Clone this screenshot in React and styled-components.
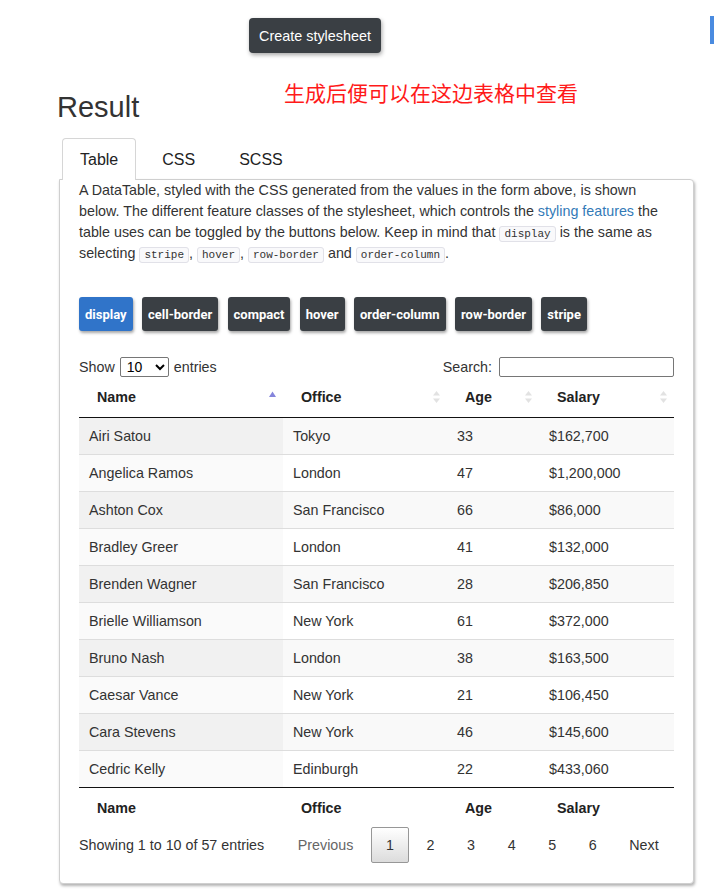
import React from "react";
import styled, { createGlobalStyle } from "styled-components";

const Global = createGlobalStyle`
  html, body { margin: 0; padding: 0; background: #fff; }
  body {
    font-family: "Liberation Sans", Arial, sans-serif;
    color: #333;
    font-size: 14.3px;
  }
`;

const Page = styled.div`
  width: 716px;
  padding-bottom: 10px;
`;

const TopBar = styled.div`
  display: flex;
  align-items: flex-start;
  justify-content: space-between;
  padding: 18px 2px 0 249px;
`;

const DarkButton = styled.button`
  height: 35px;
  padding: 0 10px;
  border: none;
  border-radius: 4px;
  background: #3a3f44;
  color: #fff;
  font-family: "Liberation Sans", Arial, sans-serif;
  font-size: 14.4px;
  box-shadow: 1px 2px 4px rgba(0, 0, 0, 0.35);
  cursor: pointer;
`;

const Indicator = styled.div`
  width: 4px;
  height: 28px;
  margin-top: -2px;
  background: #4a8be0;
`;

const ResultHeader = styled.div`
  display: grid;
  grid-template-columns: 227px auto;
  align-items: start;
  margin-top: 29px;
  padding-left: 57px;
`;

const Title = styled.h2`
  margin: 10px 0 0;
  font-size: 29px;
  font-weight: 400;
  line-height: 31px;
  color: #333;
`;

const Note = styled.div`
  font-family: "Noto Sans CJK SC", sans-serif;
  font-size: 21px;
  line-height: 21px;
  color: #ff1a1a;
`;

const Section = styled.div`
  margin: 15px 0 0 59px;
  width: 635px;
`;

const Tabs = styled.div`
  display: flex;
  padding-left: 3px;
  position: relative;
  z-index: 1;
  margin-bottom: -1px;
`;

const Tab = styled.div`
  height: 42px;
  box-sizing: border-box;
  padding: 0 17px;
  margin-right: 8px;
  display: flex;
  align-items: center;
  font-size: 16px;
  color: #222;
  border: 1px solid ${(p) => (p.$active ? "#d6d6d6" : "transparent")};
  border-bottom: none;
  border-radius: 4px 4px 0 0;
  background: ${(p) => (p.$active ? "#fff" : "transparent")};
`;

const Panel = styled.div`
  border: 1px solid #cfcfcf;
  border-radius: 0 4px 4px 4px;
  padding: 0 19px 20px 19px;
  box-shadow: 1px 2px 3px rgba(0, 0, 0, 0.3);
  background: #fff;
`;

const Desc = styled.p`
  margin: 0;
  line-height: 21px;
  color: #333;
`;

const Link = styled.a`
  color: #337ab7;
  text-decoration: none;
`;

const Code = styled.code`
  font-family: "Liberation Mono", "DejaVu Sans Mono", monospace;
  font-size: 11px;
  line-height: 1;
  padding: 1px 4px;
  border: 1px solid #e1e1e8;
  border-radius: 3px;
  background: #f9f9fb;
  color: #333;
`;

const FeatureBar = styled.div`
  display: flex;
  gap: 9.4px;
  margin-top: 33px;
`;

const Feature = styled.button`
  height: 34px;
  padding: 0 6px;
  border: none;
  border-radius: 3px;
  background: ${(p) => (p.$on ? "#3074c9" : "#3a3f44")};
  color: #fff;
  font-family: Roboto, "Liberation Sans", sans-serif;
  font-weight: 700;
  font-size: 13px;
  box-shadow: 1px 2px 3px rgba(0, 0, 0, 0.35);
  cursor: pointer;
`;

const Controls = styled.div`
  display: flex;
  justify-content: space-between;
  align-items: center;
  margin-top: 26px;
  height: 20px;
`;

const Label = styled.label`
  display: flex;
  align-items: center;
  gap: 5px;
`;

const Select = styled.select`
  width: 49px;
  height: 20px;
  padding: 0 2px;
  font-family: "Liberation Sans", Arial, sans-serif;
  font-size: 14px;
  border: 1px solid #767676;
  border-radius: 2px;
  background: #fff;
  color: #000;
`;

const Search = styled.input`
  width: 175px;
  height: 20px;
  box-sizing: border-box;
  margin-left: 2px;
  border: 1px solid #767676;
  border-radius: 2px;
  padding: 0 3px;
`;

const Table = styled.table`
  width: 100%;
  table-layout: fixed;
  border-collapse: collapse;
`;

const Th = styled.th`
  box-sizing: border-box;
  width: ${(p) => p.$w}px;
  text-align: left;
  font-weight: 700;
  line-height: 20px;
  padding: 10px 6px 10px 18px;
  border-bottom: 1px solid #111;
  color: #222;
`;

const HeadInner = styled.div`
  display: flex;
  justify-content: space-between;
  align-items: center;
`;

const FootTh = styled.th`
  text-align: left;
  font-weight: 700;
  line-height: 20px;
  padding: 10px 18px 6px;
  border-top: 1px solid #111;
  color: #222;
`;

const Row = styled.tr`
  background: ${(p) => (p.$odd ? "#f9f9f9" : "#fff")};
  &:not(:first-child) > td { border-top: 1px solid #ddd; }
`;

const Td = styled.td`
  padding: 8px 10px;
  line-height: 20px;
  color: #333;
  background: ${(p) => (p.$sorted ? (p.$odd ? "#f1f1f1" : "#fafafa") : "transparent")};
`;

const Footer = styled.div`
  display: flex;
  justify-content: space-between;
  align-items: center;
  padding-top: 3px;
`;

const Info = styled.div`
  color: #333;
`;

const Pager = styled.div`
  display: flex;
  align-items: center;
`;

const PageBtn = styled.span`
  box-sizing: border-box;
  min-width: 1.5em;
  padding: 0.5em 1em;
  margin-left: 2px;
  line-height: 20px;
  text-align: center;
  border: 1px solid ${(p) => (p.$current ? "#979797" : "transparent")};
  border-radius: 2px;
  color: ${(p) => (p.$disabled ? "#666" : "#333")};
  background: ${(p) =>
    p.$current ? "linear-gradient(to bottom, #fff 0%, #dcdcdc 100%)" : "transparent"};
`;

function SortIcon({ asc }) {
  if (asc) {
    return (
      <svg width="9" height="14" viewBox="0 0 9 14">
        <polygon points="1,7 4.5,1.5 8,7" fill="#8585dc" />
      </svg>
    );
  }
  return (
    <svg width="9" height="14" viewBox="0 0 9 14">
      <polygon points="1,5.5 4.5,1 8,5.5" fill="#e2e2e2" />
      <polygon points="1,8.5 4.5,13 8,8.5" fill="#e2e2e2" />
    </svg>
  );
}

const cols = [
  { name: "Name", w: 204 },
  { name: "Office", w: 164 },
  { name: "Age", w: 92 },
  { name: "Salary", w: 135 },
];

const data = [
  ["Airi Satou", "Tokyo", "33", "$162,700"],
  ["Angelica Ramos", "London", "47", "$1,200,000"],
  ["Ashton Cox", "San Francisco", "66", "$86,000"],
  ["Bradley Greer", "London", "41", "$132,000"],
  ["Brenden Wagner", "San Francisco", "28", "$206,850"],
  ["Brielle Williamson", "New York", "61", "$372,000"],
  ["Bruno Nash", "London", "38", "$163,500"],
  ["Caesar Vance", "New York", "21", "$106,450"],
  ["Cara Stevens", "New York", "46", "$145,600"],
  ["Cedric Kelly", "Edinburgh", "22", "$433,060"],
];

const features = ["display", "cell-border", "compact", "hover", "order-column", "row-border", "stripe"];

export default function App() {
  return (
    <Page>
      <Global />
      <TopBar>
        <DarkButton>Create stylesheet</DarkButton>
        <Indicator />
      </TopBar>
      <ResultHeader>
        <Title>Result</Title>
        <Note>生成后便可以在这边表格中查看</Note>
      </ResultHeader>
      <Section>
        <Tabs>
          <Tab $active>Table</Tab>
          <Tab>CSS</Tab>
          <Tab>SCSS</Tab>
        </Tabs>
        <Panel>
          <Desc>
            A DataTable, styled with the CSS generated from the values in the form above, is shown
            below. The different feature classes of the stylesheet, which controls the{" "}
            <Link href="#">styling features</Link> the table uses can be toggled by the buttons
            below. Keep in mind that <Code>display</Code> is the same as selecting{" "}
            <Code>stripe</Code>, <Code>hover</Code>, <Code>row-border</Code> and{" "}
            <Code>order-column</Code>.
          </Desc>
          <FeatureBar>
            {features.map((f) => (
              <Feature key={f} $on={f === "display"}>
                {f}
              </Feature>
            ))}
          </FeatureBar>
          <Controls>
            <Label>
              Show
              <Select defaultValue="10">
                <option value="10">10</option>
                <option value="25">25</option>
                <option value="50">50</option>
                <option value="100">100</option>
              </Select>
              entries
            </Label>
            <Label>
              Search:
              <Search type="search" />
            </Label>
          </Controls>
          <Table>
            <thead>
              <tr>
                {cols.map((c, i) => (
                  <Th key={c.name} $w={c.w}>
                    <HeadInner>
                      <span>{c.name}</span>
                      <SortIcon asc={i === 0} />
                    </HeadInner>
                  </Th>
                ))}
              </tr>
            </thead>
            <tbody>
              {data.map((r, i) => (
                <Row key={r[0]} $odd={i % 2 === 0}>
                  {r.map((v, j) => (
                    <Td key={j} $sorted={j === 0} $odd={i % 2 === 0}>
                      {v}
                    </Td>
                  ))}
                </Row>
              ))}
            </tbody>
            <tfoot>
              <tr>
                {cols.map((c) => (
                  <FootTh key={c.name}>{c.name}</FootTh>
                ))}
              </tr>
            </tfoot>
          </Table>
          <Footer>
            <Info>Showing 1 to 10 of 57 entries</Info>
            <Pager>
              <PageBtn $disabled>Previous</PageBtn>
              <PageBtn $current>1</PageBtn>
              <PageBtn>2</PageBtn>
              <PageBtn>3</PageBtn>
              <PageBtn>4</PageBtn>
              <PageBtn>5</PageBtn>
              <PageBtn>6</PageBtn>
              <PageBtn>Next</PageBtn>
            </Pager>
          </Footer>
        </Panel>
      </Section>
    </Page>
  );
}
